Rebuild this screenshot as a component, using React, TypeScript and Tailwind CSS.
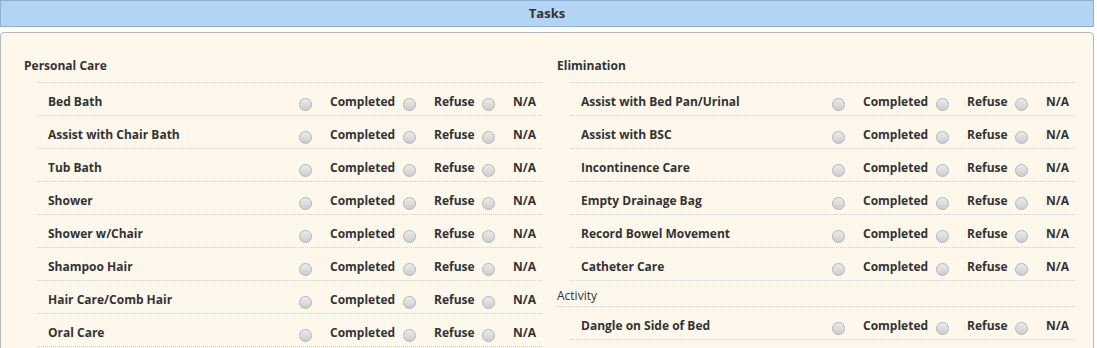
const personalCare = [
  "Bed Bath",
  "Assist with Chair Bath",
  "Tub Bath",
  "Shower",
  "Shower w/Chair",
  "Shampoo Hair",
  "Hair Care/Comb Hair",
  "Oral Care",
];

const elimination = [
  "Assist with Bed Pan/Urinal",
  "Assist with BSC",
  "Incontinence Care",
  "Empty Drainage Bag",
  "Record Bowel Movement",
  "Catheter Care",
];

function Radio() {
  return (
    <span className="mt-[15px] h-[13px] w-[13px] shrink-0 rounded-full border border-[#b4b4b4] bg-linear-to-b from-[#ececec] to-[#cdcdcd]" />
  );
}

function TaskRow({ label }: { label: string }) {
  return (
    <div className="flex h-[33px] border-b border-dotted border-[#cfcfcf] pl-[11px] pr-[7px]">
      <span className="flex-1 pt-[9px] leading-[20px]">{label}</span>
      <div className="flex">
        <Radio />
        <span className="ml-[18px] w-[73px] pt-[9px] leading-[20px]">Completed</span>
        <Radio />
        <span className="ml-[18px] w-[48px] pt-[9px] leading-[20px]">Refuse</span>
        <Radio />
        <span className="ml-[18px] w-[22px] pt-[9px] leading-[20px]">N/A</span>
      </div>
    </div>
  );
}

function Heading({ title }: { title: string }) {
  return <div className="pt-[23px] pb-[6px] leading-[20px]">{title}</div>;
}

export default function App() {
  return (
    <div className="min-h-screen bg-white font-['Open_Sans',sans-serif] text-[12px] font-bold text-[#333]">
      {/* Title bar */}
      <div className="flex h-[27px] w-[1094px] items-center justify-center border border-[#8eb0d2] bg-[#b3d4f5] text-[13px] text-[#333]">
        Tasks
      </div>

      {/* Panel */}
      <div className="mt-[5px] w-[1094px] rounded-t-[4px] border border-[#b8b8b8] bg-[#fdf7ec] pl-[23px] pb-4">
        <div className="grid grid-cols-[518px_518px] gap-x-[15px]">
          {/* Personal Care */}
          <div>
            <Heading title="Personal Care" />
            <div className="ml-[13px] border-t border-dotted border-[#cfcfcf]">
              {personalCare.map((t) => (
                <TaskRow key={t} label={t} />
              ))}
            </div>
          </div>

          {/* Elimination + Activity */}
          <div>
            <Heading title="Elimination" />
            <div className="ml-[13px] border-t border-dotted border-[#cfcfcf]">
              {elimination.map((t) => (
                <TaskRow key={t} label={t} />
              ))}
            </div>
            <div className="h-[26px] border-b border-dotted border-[#cfcfcf] pt-[5px] leading-[20px] font-normal">
              Activity
            </div>
            <div className="ml-[13px]">
              <TaskRow label="Dangle on Side of Bed" />
            </div>
          </div>
        </div>
      </div>
    </div>
  );
}
